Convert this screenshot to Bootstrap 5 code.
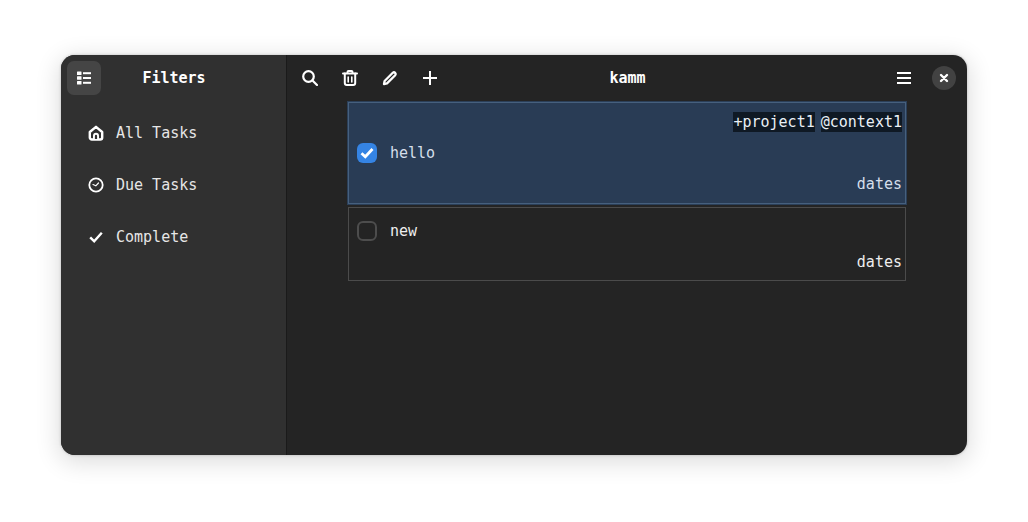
<!DOCTYPE html>
<html lang="en">
<head>
    <meta charset="UTF-8">
    <meta name="viewport" content="width=device-width, initial-scale=1.0">
    <title>kamm</title>
    <link href="https://cdn.jsdelivr.net/npm/bootstrap@5.3.0/dist/css/bootstrap.min.css" rel="stylesheet">
    <style>
        html, body {
            height: 100%;
        }
        body {
            background-color: #fff;
            font-family: "DejaVu Sans Mono", "Liberation Mono", monospace;
            font-size: 15px;
            line-height: 20px;
            overflow: hidden;
        }
        .app-stage {
            padding: 55px 61px 67px;
            height: 522px;
        }
        .app-window {
            height: 400px;
            border-radius: 14px;
            overflow: hidden;
            background-color: #242424;
            color: #fff;
            box-shadow: 0 5px 24px 2px rgba(0, 0, 0, 0.14), 0 0 3px rgba(0, 0, 0, 0.22);
        }
        .side-pane {
            width: 225px;
            background-color: #303030;
        }
        .side-head {
            height: 46px;
            padding: 6px;
        }
        .side-toggle {
            width: 34px;
            height: 34px;
            border-radius: 7px;
            background-color: #454545;
        }
        .side-title {
            width: 146px;
            font-weight: 700;
            font-size: 15px;
        }
        .side-list {
            padding-top: 6px;
        }
        .side-item {
            height: 52px;
            padding-left: 27px;
            gap: 12px;
            color: #e6e6e6;
        }
        .side-item svg {
            width: 16px;
            height: 16px;
            flex: none;
        }
        .main-pane {
            border-left: 1px solid #1a1a1a;
            min-width: 0;
        }
        .main-head {
            height: 46px;
            padding-left: 15px;
            padding-right: 11px;
        }
        .tool-row {
            gap: 24px;
            width: 136px;
        }
        .tool-btn {
            width: 16px;
            height: 16px;
            flex: none;
        }
        .head-title {
            font-weight: 700;
            text-align: center;
            padding-right: 79px;
        }
        .close-btn {
            width: 24px;
            height: 24px;
            border-radius: 50%;
            background-color: #424242;
        }
        .task-list {
            padding: 1px 61px 0 61px;
            gap: 3px;
        }
        .task-row {
            border: 1px solid #4b4b4b;
            padding: 0 3px 0 8px;
            color: #eee;
        }
        .task-done {
            background-color: #293c55;
            border-color: #46607e;
            box-shadow: 0 0 0 1px #2b3f58;
            height: 102px;
            color: #d5dfeb;
        }
        .task-open {
            height: 74px;
        }
        .tag-line {
            gap: 6px;
            height: 20px;
            margin-top: 9px;
            color: #eaf0f6;
        }
        .tag-chip {
            background-color: #0f1924;
        }
        .task-main {
            gap: 13px;
            height: 20px;
        }
        .task-done .task-main {
            margin-top: 11px;
        }
        .task-open .task-main {
            margin-top: 13px;
        }
        .task-date {
            margin-top: 11px;
            text-align: right;
        }
        .tick-box {
            width: 20px;
            height: 20px;
            border-radius: 6px;
            flex: none;
        }
        .tick-on {
            background-color: #3584e4;
        }
        .tick-off {
            border: 2px solid #4d4d4d;
        }
    </style>
</head>
<body>
    <div class="app-stage">
        <div class="app-window d-flex">
            <div class="side-pane d-flex flex-column flex-shrink-0">
                <div class="side-head d-flex align-items-center">
                    <div class="side-toggle d-flex align-items-center justify-content-center">
                        <svg width="16" height="16" viewBox="0 0 16 16" fill="#fff">
                            <rect x="1" y="1.500" width="4.500" height="3.500" rx=".5"/><rect x="1" y="6.200" width="4.500" height="3.500" rx=".5"/><rect x="1" y="11" width="4.500" height="3.500" rx=".5"/>
                            <rect x="7" y="2.200" width="8" height="2"/><rect x="7" y="7" width="8" height="2"/><rect x="7" y="11.800" width="8" height="2"/>
                        </svg>
                    </div>
                    <div class="side-title text-center">Filters</div>
                </div>
                <div class="side-list d-flex flex-column">
                    <div class="side-item d-flex align-items-center">
                        <svg viewBox="0 0 16 16" fill="none" stroke="#fff" stroke-width="2.400" stroke-linejoin="round">
                            <path d="M1.800 7 8 1.800 14.200 7v5.500a2 2 0 0 1-2 2H3.800a2 2 0 0 1-2-2z"/>
                            <path d="M8 7.800a3 3 0 0 1 3 3V15H5v-4.200a3 3 0 0 1 3-3z" fill="#fff" stroke="none"/>
                            <path d="M8 9.800a1.100 1.100 0 0 1 1.100 1.100V14H6.900v-3.100A1.100 1.100 0 0 1 8 9.800z" fill="#303030" stroke="none"/>
                        </svg>
                        <span>All Tasks</span>
                    </div>
                    <div class="side-item d-flex align-items-center">
                        <svg viewBox="0 0 16 16" fill="none" stroke="#fff" stroke-width="1.800" stroke-linecap="round" stroke-linejoin="round">
                            <circle cx="8" cy="8" r="6.700"/>
                            <path d="M5 7.500 7.800 8.800 10.500 6" stroke-width="1.200"/>
                        </svg>
                        <span>Due Tasks</span>
                    </div>
                    <div class="side-item d-flex align-items-center">
                        <svg viewBox="0 0 16 16" fill="none" stroke="#fff" stroke-width="2.400">
                            <path d="M2.200 8.300 6.200 12.300 13.800 3.800"/>
                        </svg>
                        <span>Complete</span>
                    </div>
                </div>
            </div>
            <div class="main-pane d-flex flex-column flex-grow-1">
                <div class="main-head d-flex align-items-center">
                    <div class="tool-row d-flex align-items-center">
                        <svg class="tool-btn" viewBox="0 0 16 16" fill="none" stroke="#fff" stroke-width="2.200" stroke-linecap="round">
                            <circle cx="6.500" cy="6.500" r="5.300"/><path d="M10.500 10.500 15 15"/>
                        </svg>
                        <svg class="tool-btn" viewBox="0 0 16 16" fill="none" stroke="#fff" stroke-width="2" stroke-linecap="round" stroke-linejoin="round">
                            <path d="M1 3.500h14M5.500 3.500V2a1 1 0 0 1 1-1h3a1 1 0 0 1 1 1v1.500"/>
                            <path d="M2.800 3.500V13a2 2 0 0 0 2 2h6.400a2 2 0 0 0 2-2V3.500"/>
                            <path d="M6.200 7v5M9.800 7v5" stroke-width="1.600"/>
                        </svg>
                        <svg class="tool-btn" viewBox="0 0 16 16" fill="none" stroke="#fff" stroke-width="2.300" stroke-linejoin="round">
                            <path d="M2 14 2.600 11 10.800 2.800a1.700 1.700 0 0 1 2.400 2.400L5 13.400z"/>
                        </svg>
                        <svg class="tool-btn" viewBox="0 0 16 16" stroke="#fff" stroke-width="2">
                            <path d="M8 1v14M1 8h14"/>
                        </svg>
                    </div>
                    <div class="head-title flex-grow-1">kamm</div>
                    <div class="d-flex align-items-center">
                        <svg class="tool-btn me-3" viewBox="0 0 16 16" fill="#fff">
                            <rect x="1" y="2" width="14" height="2"/><rect x="1" y="7" width="14" height="2"/><rect x="1" y="12" width="14" height="2"/>
                        </svg>
                        <div class="close-btn d-flex align-items-center justify-content-center ms-1">
                            <svg width="10" height="10" viewBox="0 0 10 10" stroke="#fff" stroke-width="2.400" stroke-linecap="round">
                                <path d="M2 2 8 8M8 2 2 8"/>
                            </svg>
                        </div>
                    </div>
                </div>
                <div class="task-list d-flex flex-column">
                    <div class="task-row task-done">
                        <div class="tag-line d-flex justify-content-end">
                            <span class="tag-chip">+project1</span>
                            <span class="tag-chip">@context1</span>
                        </div>
                        <div class="task-main d-flex align-items-center">
                            <span class="tick-box tick-on d-flex align-items-center justify-content-center">
                                <svg width="14" height="14" viewBox="0 0 14 14" fill="none" stroke="#fff" stroke-width="2.800">
                                    <path d="M1.500 7.200 5.300 10.800 12.500 3"/>
                                </svg>
                            </span>
                            <span>hello</span>
                        </div>
                        <div class="task-date">dates</div>
                    </div>
                    <div class="task-row task-open">
                        <div class="task-main d-flex align-items-center">
                            <span class="tick-box tick-off"></span>
                            <span>new</span>
                        </div>
                        <div class="task-date">dates</div>
                    </div>
                </div>
            </div>
        </div>
    </div>
    <script src="https://cdn.jsdelivr.net/npm/bootstrap@5.3.0/dist/js/bootstrap.bundle.min.js"></script>
</body>
</html>
